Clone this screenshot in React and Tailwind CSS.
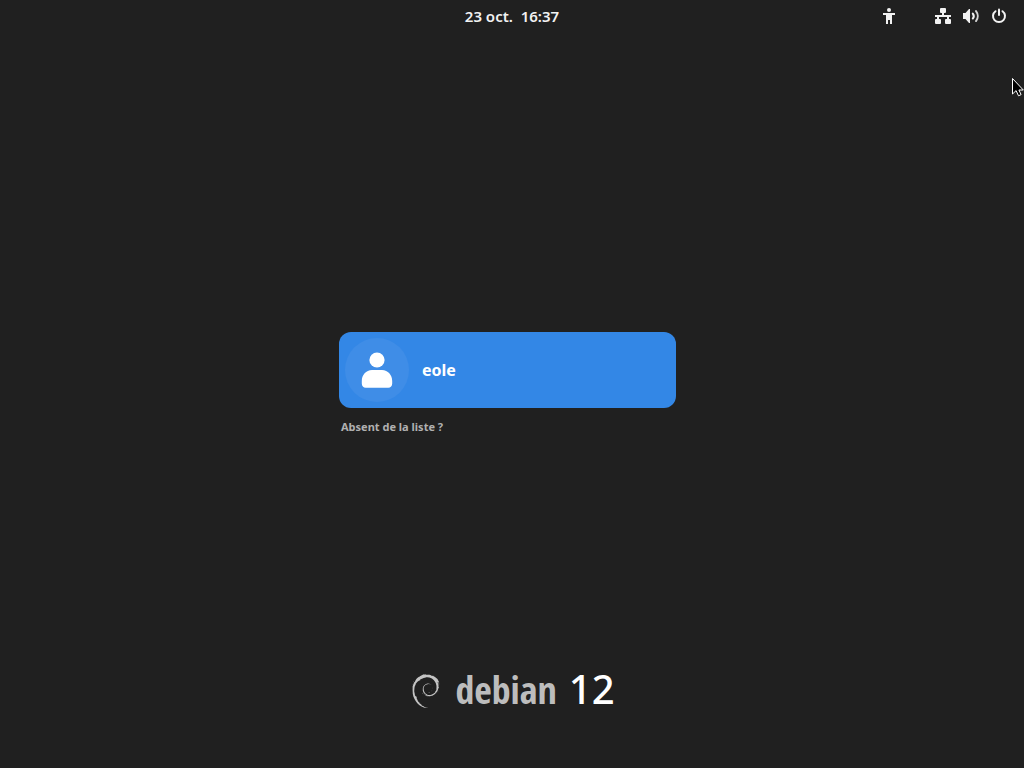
import { SiDebian } from "react-icons/si";

function AccessibilityIcon() {
  return (
    <svg viewBox="0 0 16 16" className="size-4" fill="currentColor" aria-hidden="true">
      <circle cx="8" cy="2" r="2" />
      <path d="M2 5h12v2h-3v9H9v-4H7v4H5V7H2z" />
    </svg>
  );
}

function NetworkIcon() {
  return (
    <svg viewBox="0 0 16 16" className="size-4" fill="currentColor" aria-hidden="true">
      <rect x="5" y="0" width="6" height="5" rx="1" />
      <rect x="0" y="11" width="6" height="5" rx="1" />
      <rect x="10" y="11" width="6" height="5" rx="1" />
      <path d="M7 4h2v3h7v2h-2v3h-2V9H4v3H2V9H0V7h7z" />
    </svg>
  );
}

function VolumeIcon() {
  return (
    <svg viewBox="0 0 16 16" className="size-4" fill="none" stroke="currentColor" strokeWidth="2" strokeLinecap="round" aria-hidden="true">
      <path d="M0 5h2.500L6 1h1v14H6l-3.500-4H0z" fill="currentColor" stroke="none" />
      <path d="M9.800 5.500a4 4 0 0 1 0 5" />
      <path d="M13 3a8 8 0 0 1 0 10" strokeOpacity="0.85" />
    </svg>
  );
}

function PowerIcon() {
  return (
    <svg viewBox="0 0 16 16" className="size-4" fill="none" stroke="currentColor" strokeWidth="2" strokeLinecap="round" aria-hidden="true">
      <path d="M8 1.500v5.500" />
      <path d="M4.500 3.200a6 6 0 1 0 7 0" />
    </svg>
  );
}

function AvatarIcon() {
  return (
    <svg viewBox="0 0 32 36" className="h-9 w-8" fill="white" aria-hidden="true">
      <circle cx="16" cy="8" r="7.600" />
      <path d="M11 18h10c6 0 10.200 5 10.200 11v2.500c0 2.500-1.500 4.200-4 4.200H4.800c-2.500 0-4-1.700-4-4.200V29C.8 23 5 18 11 18z" />
    </svg>
  );
}

function Pointer() {
  return (
    <svg viewBox="0 0 12 20" className="absolute top-[77px] right-0 h-5 w-3" aria-hidden="true">
      <path d="M.5 1.500v15.500l3.600-3.400 2.400 5.200 2.600-1.200-2.200-4.600h4.400z" fill="#000" stroke="#fff" strokeWidth="1" />
    </svg>
  );
}

export default function App() {
  return (
    <div className="relative flex min-h-screen flex-col overflow-hidden bg-[#202020] font-['Noto_Sans',sans-serif] text-[#f2f2f2]">
      <header className="grid h-8 grid-cols-3 items-center">
        <button type="button" className="col-start-2 justify-self-center text-[15px] leading-5 font-semibold whitespace-pre">
          {"23 oct.  16:37"}
        </button>
        <div className="flex items-center gap-[38px] justify-self-end pr-[17px]">
          <button type="button" aria-label="Accessibilité"><AccessibilityIcon /></button>
          <button type="button" aria-label="Menu système" className="flex gap-3">
            <NetworkIcon />
            <VolumeIcon />
            <PowerIcon />
          </button>
        </div>
      </header>

      <main className="flex grow flex-col items-center justify-center pt-[73px]">
        <div className="flex w-full max-w-[346px] flex-col items-start gap-2 pr-[9px]">
          <button type="button" className="flex w-full items-center gap-[13px] rounded-xl bg-[#3387e6] p-1.5 text-left text-white">
            <span className="flex size-16 items-center justify-center rounded-full bg-[#3f8de7]">
              <AvatarIcon />
            </span>
            <span className="text-[16px] leading-6 font-bold">eole</span>
          </button>
          <button type="button" className="px-0.5 text-[11px] leading-[22px] font-bold text-[#b0b0b0]">
            Absent de la liste ?
          </button>
        </div>
      </main>

      <footer className="flex items-center justify-center pb-[51px]">
        <SiDebian size={34} className="text-[#c4c4c4]" aria-hidden="true" />
        <p className="flex items-baseline gap-3 pb-1 pl-3 leading-[48px]">
          <span className="font-['Open_Sans_Condensed','Roboto_Condensed','Noto_Sans_Condensed',sans-serif] text-[38px] font-bold text-[#bdbdbd]">debian</span>
          <span className="font-['Noto_Sans',sans-serif] text-[40px] font-medium text-white">12</span>
        </p>
      </footer>
      <Pointer />
    </div>
  );
}
